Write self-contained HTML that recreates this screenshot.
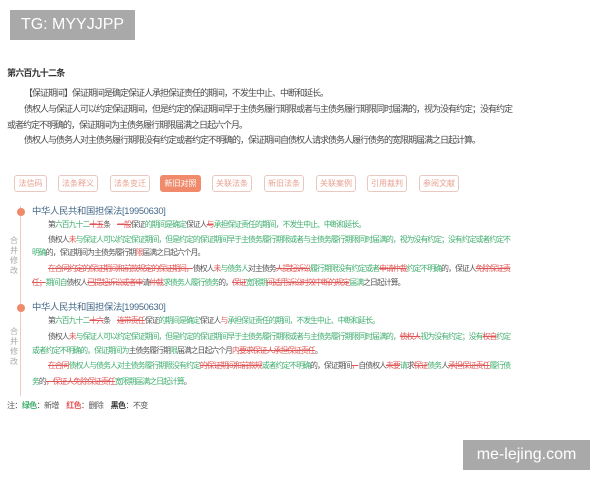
<!DOCTYPE html>
<html><head><meta charset="utf-8"><style>
*{margin:0;padding:0;box-sizing:border-box}
body{width:600px;height:480px;background:#fff;position:relative;overflow:hidden;font-family:"Liberation Sans","Noto Sans CJK SC",sans-serif;color:#555}
.a{position:absolute;white-space:nowrap;line-height:12px}
.wm{position:absolute;background:#a9a9a9;color:#fff;font-size:16px;line-height:30px;text-align:center}
.t{font-size:9px;letter-spacing:-1px;color:#4a4a4a}
.s{font-size:7.8px;letter-spacing:-0.9px;color:#555}
.g{color:#3fae6e}.r{color:#e05555;text-decoration:line-through}.rr{color:#e05555}
.btn{position:absolute;top:175px;height:17px;border:1px solid #e8c8c0;border-radius:3px;font-size:8px;color:#e8a090;text-align:center;line-height:15px}
.on{background:#f08a6a;color:#fff;border-color:#f08a6a}
.h{font-size:9.3px;letter-spacing:-0.3px;color:#44688a}
.vl{position:absolute;left:10px;font-size:8px;color:#aaa;width:10px;line-height:10px}
</style></head><body>
<div class="wm" style="left:10px;top:10px;width:125px">TG: MYYJJPP</div>
<div class="wm" style="left:463px;top:440px;width:127px">me-lejing.com</div>

<div class="a" style="left:7px;top:67px;font-size:9px;letter-spacing:-0.8px;font-weight:bold;color:#333">第六百九十二条</div>
<div class="a t" style="left:24px;top:87px">【保证期间】保证期间是确定保证人承担保证责任的期间，不发生中止、中断和延长。</div>
<div class="a t" style="left:24px;top:103px">债权人与保证人可以约定保证期间，但是约定的保证期间早于主债务履行期限或者与主债务履行期限同时届满的，视为没有约定；没有约定</div>
<div class="a t" style="left:7px;top:119px">或者约定不明确的，保证期间为主债务履行期限届满之日起六个月。</div>
<div class="a t" style="left:24px;top:134px">债权人与债务人对主债务履行期限没有约定或者约定不明确的，保证期间自债权人请求债务人履行债务的宽限期届满之日起计算。</div>

<div class="btn" style="left:14px;width:33px">法信码</div>
<div class="btn" style="left:58px;width:40px">法条释义</div>
<div class="btn" style="left:110px;width:40px">法条变迁</div>
<div class="btn on" style="left:160px;width:41px">新旧对照</div>
<div class="btn" style="left:212px;width:40px">关联法条</div>
<div class="btn" style="left:264px;width:40px">新旧法条</div>
<div class="btn" style="left:316px;width:40px">关联案例</div>
<div class="btn" style="left:367px;width:40px">引用裁判</div>
<div class="btn" style="left:419px;width:40px">参阅文献</div>

<div style="position:absolute;left:20px;top:206px;width:1px;height:190px;background:#f0c8c0"></div>
<div style="position:absolute;left:17px;top:208px;width:8px;height:8px;border-radius:50%;background:#f08a6a"></div>
<div style="position:absolute;left:17px;top:304px;width:8px;height:8px;border-radius:50%;background:#f08a6a"></div>
<div class="vl" style="top:236px">合<br>并<br>修<br>改</div>
<div class="vl" style="top:327px">合<br>并<br>修<br>改</div>

<div class="a h" style="left:32px;top:205px">中华人民共和国担保法[19950630]</div>
<div class="a s" style="left:48px;top:219px">第<span class="g">六百九十二</span><span class="r">十五</span>条　<span class="r">一般</span>保证<span class="g">的期间是确定</span>保证人<span class="r">与</span><span class="g">承担保证责任的期间，不发生中止、中断和延长。</span></div>
<div class="a s" style="left:48px;top:234px">债权人<span class="rr">未</span><span class="g">与保证人可以约定保证期间，但是约定的保证期间早于主债务履行期限或者与主债务履行期限同时届满的，视为没有约定；没有约定或者约定不</span></div>
<div class="a s" style="left:32px;top:247px"><span class="g">明确</span>的，保证期间为主债务履行期<span class="rr">限</span>届满之日起六个月。</div>
<div class="a s" style="left:48px;top:263px"><span class="r">在合同约定的保证期间和前款规定的保证期间，</span>债权人<span class="rr">未</span><span class="g">与债务人</span>对主债务<span class="r">人提起诉讼</span><span class="g">履行期限没有约定或者</span><span class="r">申请仲裁</span><span class="g">约定不明确</span>的，保证人<span class="r">免除保证责</span></div>
<div class="a s" style="left:32px;top:277px"><span class="r">任；</span><span class="g">期间自</span>债权人<span class="r">已提起诉讼或者申</span>请<span class="r">仲裁</span><span class="g">求债务人履行债务</span>的，<span class="r">保证</span><span class="g">宽限期</span><span class="r">间适用诉讼时效中断的规定</span><span class="g">届满</span>之日起计算。</div>

<div class="a h" style="left:32px;top:301px">中华人民共和国担保法[19950630]</div>
<div class="a s" style="left:48px;top:315px">第<span class="g">六百九十二</span><span class="r">十六</span>条　<span class="r">连带责任</span>保证<span class="g">的期间是确定</span>保证人<span class="rr">与</span><span class="g">承担保证责任的期间，不发生中止、中断和延长。</span></div>
<div class="a s" style="left:48px;top:331px">债权人<span class="rr">未</span><span class="g">与保证人可以约定保证期间，但是约定的保证期间早于主债务履行期限或者与主债务履行期限同时届满的，</span><span class="r">债权人</span><span class="g">视为没有约定；没有</span><span class="r">权自</span><span class="g">约定</span></div>
<div class="a s" style="left:32px;top:345px"><span class="g">或者约定不明确的，保证期间为</span>主债务履行期<span class="g">限</span>届满之日起六个月<span class="rr">内</span><span class="r">要求保证人承担保证责任</span>。</div>
<div class="a s" style="left:48px;top:360px"><span class="r">在合同</span><span class="g">债权人与债务人对主债务履行期限没有约定</span><span class="r">的保证期间和前款规</span><span class="g">或者约定不明确</span>的，保证期间<span class="r">，</span>自债权人<span class="r">未要</span><span class="g">请</span>求<span class="r">保证</span><span class="g">债务</span>人<span class="r">承担保证责任</span><span class="g">履行债</span></div>
<div class="a s" style="left:32px;top:376px"><span class="g">务</span>的<span class="r">，保证人免除保证责任</span><span class="g">宽限期届满之日起计算</span>。</div>

<div class="a" style="left:7px;top:400px;font-size:8px;letter-spacing:-0.6px;color:#555">注：<b class="g">绿色</b>：新增　<b class="rr">红色</b>：删除　<b style="color:#333">黑色</b>：不变</div>
</body></html>
